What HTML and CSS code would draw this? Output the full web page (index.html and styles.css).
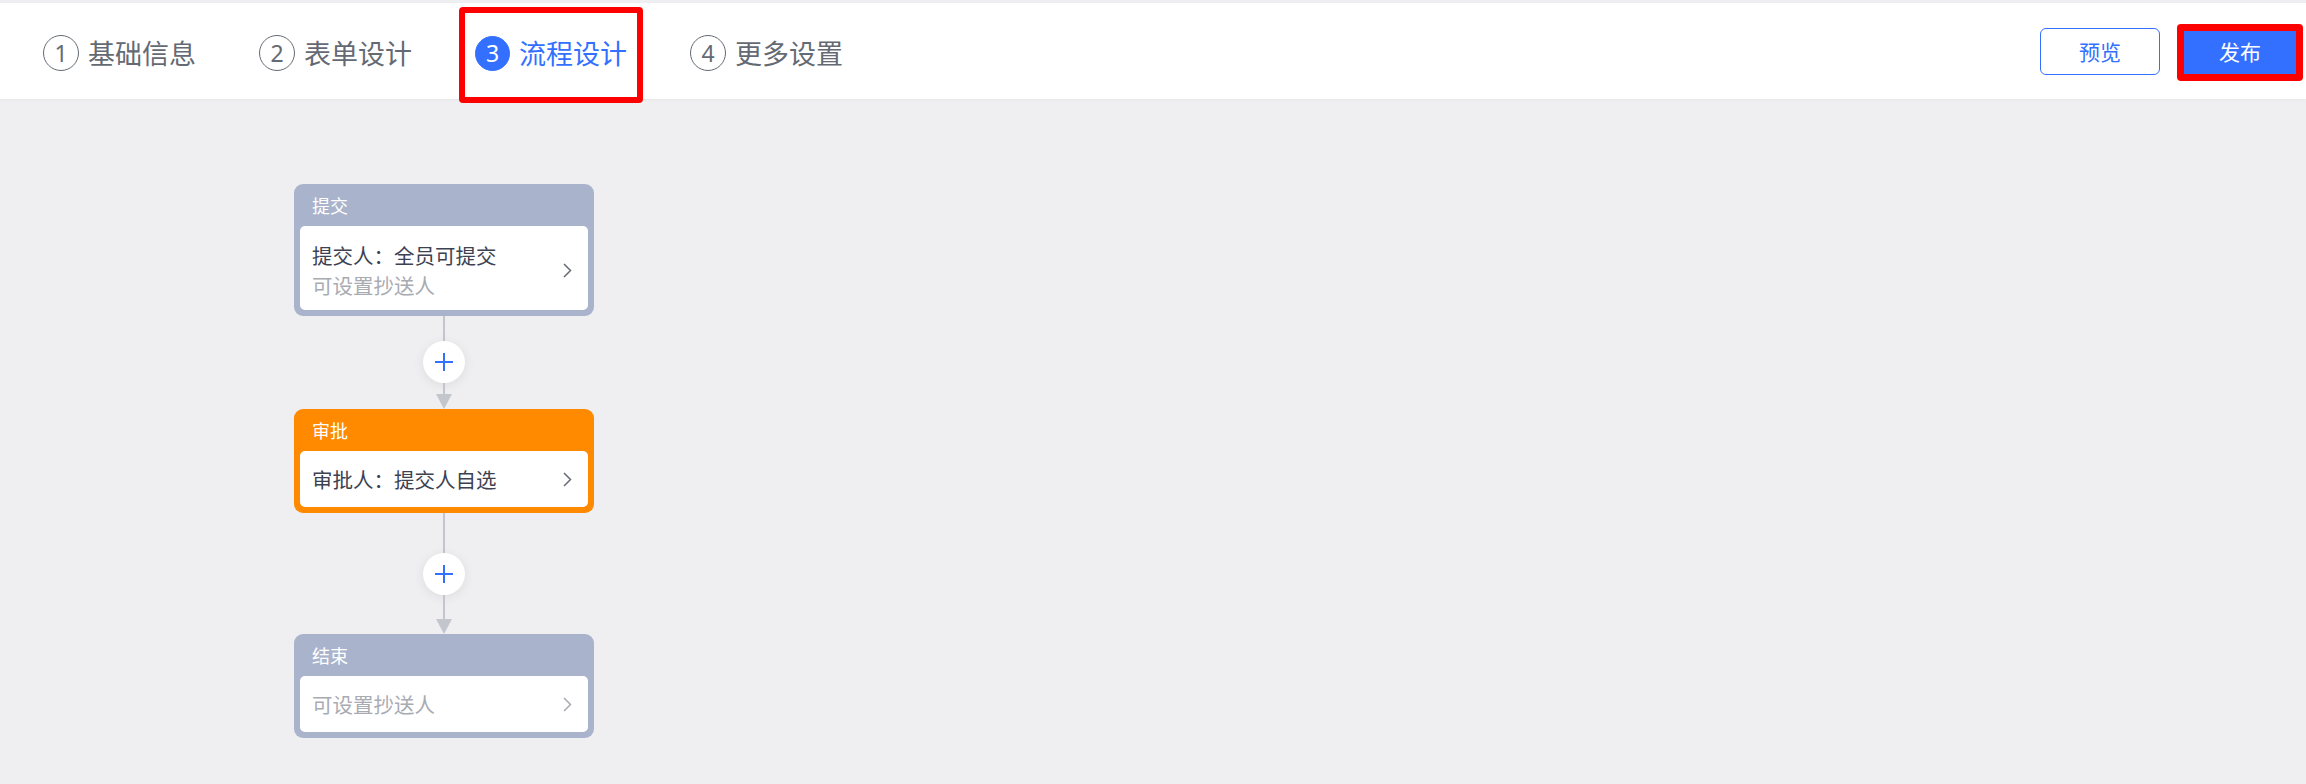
FILE: index.html
```html
<!DOCTYPE html>
<html lang="zh-CN">
<head>
<meta charset="utf-8">
<title>流程设计</title>
<link rel="stylesheet" href="styles.css">
</head>
<body>
<header class="topbar">
  <nav class="steps">
    <div class="step"><span class="step-num">1</span><span class="step-label">基础信息</span></div>
    <div class="step"><span class="step-num">2</span><span class="step-label">表单设计</span></div>
    <div class="step step-active annotated annotated-step"><span class="step-num">3</span><span class="step-label">流程设计</span></div>
    <div class="step"><span class="step-num">4</span><span class="step-label">更多设置</span></div>
  </nav>
  <div class="actions">
    <button class="btn btn-outline">预览</button>
    <button class="btn btn-primary annotated annotated-btn">发布</button>
  </div>
</header>
<main class="canvas">
  <div class="flow">
    <section class="node node-gray">
      <div class="node-title">提交</div>
      <div class="node-body node-body-two">
        <div class="node-text">
          <div class="node-main">提交人：全员可提交</div>
          <div class="node-sub">可设置抄送人</div>
        </div>
        <svg class="chev" viewBox="0 0 9 15" width="9" height="15"><path d="M1 1 L7.5 7.5 L1 14" fill="none" stroke="#666a72" stroke-width="1.5"/></svg>
      </div>
    </section>
    <div class="connector connector-a">
      <div class="line line-top"></div>
      <div class="add-btn"><svg viewBox="0 0 20 20" width="20" height="20"><path d="M10 1 V19 M1 10 H19" stroke="#3370ff" stroke-width="2" fill="none"/></svg></div>
      <div class="line line-bottom"></div>
      <div class="arrow"></div>
    </div>
    <section class="node node-orange">
      <div class="node-title">审批</div>
      <div class="node-body">
        <div class="node-text">
          <div class="node-main">审批人：提交人自选</div>
        </div>
        <svg class="chev" viewBox="0 0 9 15" width="9" height="15"><path d="M1 1 L7.5 7.5 L1 14" fill="none" stroke="#666a72" stroke-width="1.5"/></svg>
      </div>
    </section>
    <div class="connector connector-b">
      <div class="line line-top"></div>
      <div class="add-btn"><svg viewBox="0 0 20 20" width="20" height="20"><path d="M10 1 V19 M1 10 H19" stroke="#3370ff" stroke-width="2" fill="none"/></svg></div>
      <div class="line line-bottom"></div>
      <div class="arrow"></div>
    </div>
    <section class="node node-gray">
      <div class="node-title">结束</div>
      <div class="node-body">
        <div class="node-text">
          <div class="node-sub">可设置抄送人</div>
        </div>
        <svg class="chev" viewBox="0 0 9 15" width="9" height="15"><path d="M1 1 L7.5 7.5 L1 14" fill="none" stroke="#a8abb2" stroke-width="1.5"/></svg>
      </div>
    </section>
  </div>
</main>
</body>
</html>
```

FILE: styles.css
```css
* { box-sizing: border-box; }
html, body {
  margin: 0;
  padding: 0;
}
body {
  background: #efeff2;
  font-family: "Noto Sans CJK SC", "Noto Sans", sans-serif;
  width: 2306px;
  height: 784px;
  overflow: hidden;
  padding-top: 3px;
}
.topbar {
  height: 96px;
  background: #ffffff;
  display: flex;
  align-items: center;
  justify-content: space-between;
  padding: 4px 6px 0 43px;
  box-shadow: 0 1px 3px rgba(0, 0, 0, 0.04);
}
.steps {
  display: flex;
  align-items: center;
  gap: 63px;
}
.step {
  display: flex;
  align-items: center;
  gap: 9px;
  color: #646a73;
}
.step-num {
  width: 36px;
  height: 36px;
  border: 1.5px solid #646a73;
  border-radius: 50%;
  display: flex;
  align-items: center;
  justify-content: center;
  font-size: 23px;
  line-height: 1;
  font-family: "Noto Sans", sans-serif;
}
.step-label {
  font-size: 27px;
  line-height: 36px;
}
.step-active { color: #3370ff; }
.step-active .step-num {
  background: #3370ff;
  border-color: #3370ff;
  color: #ffffff;
  width: 35px;
  height: 35px;
}
.annotated { position: relative; }
.annotated::after {
  content: "";
  position: absolute;
  border: 6px solid #ff0000;
  border-radius: 4px;
  pointer-events: none;
}
.annotated-step::after {
  left: -16px;
  right: -16px;
  top: -28px;
  bottom: -32px;
}
.annotated-btn::after {
  left: -4px;
  right: -4px;
  top: -5px;
  bottom: -7px;
  border-width: 7px 7px 7px 7px;
}
.actions {
  display: flex;
  align-items: center;
  gap: 20px;
  margin-top: -4px;
}
.btn {
  width: 120px;
  height: 47px;
  border-radius: 6px;
  font-family: "Noto Sans CJK SC", sans-serif;
  font-size: 21px;
  cursor: pointer;
}
.btn-outline {
  background: #ffffff;
  border: 1.5px solid #3370ff;
  color: #3370ff;
}
.btn-primary {
  background: #3370ff;
  border: 1px solid #3370ff;
  color: #ffffff;
}
.canvas {
  padding: 85px 0 0 294px;
}
.flow {
  width: 300px;
  display: flex;
  flex-direction: column;
  align-items: center;
}
.node {
  width: 300px;
  border-radius: 9px;
  padding: 0 6px 6px;
}
.node-gray { background: #a9b4cc; }
.node-orange { background: #ff8a00; }
.node-title {
  height: 42px;
  padding-left: 12px;
  color: #ffffff;
  font-size: 18px;
  line-height: 42px;
}
.node-body {
  background: #ffffff;
  border-radius: 5px;
  display: flex;
  align-items: center;
  justify-content: space-between;
  padding: 13px 16px 13px 12px;
}
.node-body-two { padding-top: 14px; padding-bottom: 10px; }
.node-text { font-size: 20.5px; line-height: 30px; }
.node-main { color: #3c4252; }
.node-sub { color: #a8abb2; }
.chev { display: block; flex: none; }
.connector {
  display: flex;
  flex-direction: column;
  align-items: center;
}
.line {
  width: 2px;
  background: #c3c6cd;
}
.connector-a .line-top { height: 25px; }
.connector-a .line-bottom { height: 11px; }
.connector-b .line-top { height: 40px; }
.connector-b .line-bottom { height: 24px; }
.add-btn {
  width: 42px;
  height: 42px;
  border-radius: 50%;
  background: #ffffff;
  box-shadow: 0 2px 12px rgba(0, 0, 0, 0.08);
  display: flex;
  align-items: center;
  justify-content: center;
}
.add-btn svg { display: block; }
.arrow {
  width: 0;
  height: 0;
  border-left: 8px solid transparent;
  border-right: 8px solid transparent;
  border-top: 15px solid #c3c6cd;
}
```
